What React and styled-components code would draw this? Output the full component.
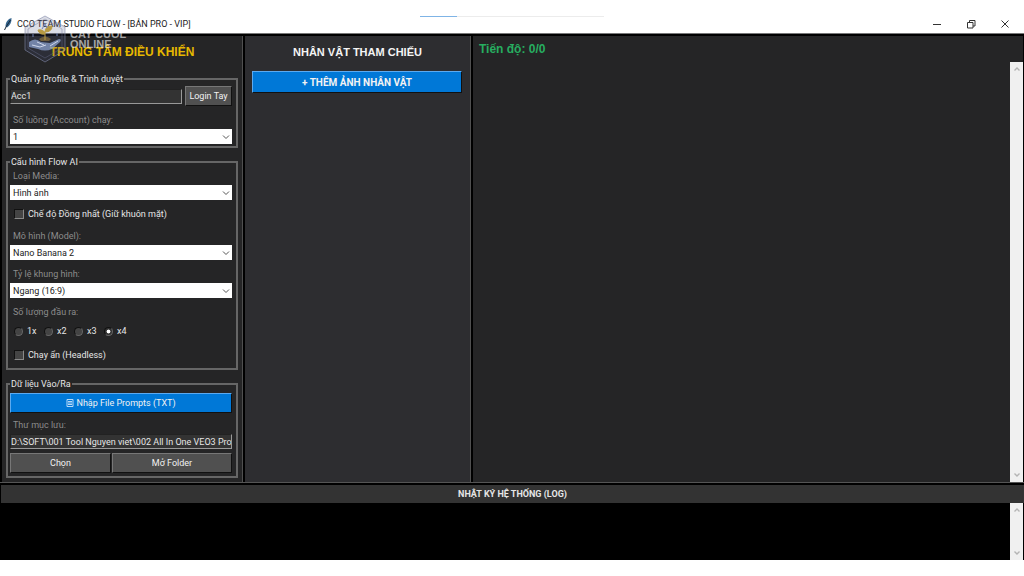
import React, { useState } from 'react';
import styled, { createGlobalStyle } from 'styled-components';

const mediaTypes = ['Hình ảnh', 'Video'];
const models = ['Nano Banana 2', 'Nano Banana Pro'];
const ratios = ['Ngang (16:9)', 'Dọc (9:16)'];
const threads = ['1', '2', '3', '4'];
const outputs = ['1x', 'x2', 'x3', 'x4'];

const SelectField = ({ id, label, options }) => (
  <Field>
    <label htmlFor={id}>{label}</label>
    <SelectBox>
      <select id={id}>
        {options.map((option) => (
          <option key={option}>{option}</option>
        ))}
      </select>
      <svg viewBox="0 0 8 8" width="8" height="8" aria-hidden="true">
        <path d="M1 2.5 4 5.5 7 2.5" fill="none" stroke="#555" />
      </svg>
    </SelectBox>
  </Field>
);

const Arrow = ({ down }) => (
  <svg viewBox="0 0 8 8" width="8" height="8" aria-hidden="true">
    <path
      d={down ? 'M1.5 2.5 4 5 6.5 2.5' : 'M1.5 5.5 4 3 6.5 5.5'}
      fill="none"
      stroke="#b4b4b4"
      strokeWidth="1.4"
    />
  </svg>
);

const ScrollBar = () => (
  <Scroll>
    <Arrow />
    <Arrow down />
  </Scroll>
);

const Watermark = () => (
  <Mark>
    <svg viewBox="0 0 44 50" width="44" height="50" aria-hidden="true">
      <path
        d="M22 2 42 13V36L22 48 2 36V13Z"
        fill="#4a5480"
        fillOpacity="0.2"
        stroke="#8288a8"
        strokeOpacity="0.6"
      />
      <path d="M22 5 39 15V34L22 44 5 34V15Z" fill="none" stroke="#6b7192" strokeOpacity="0.4" />
      <path d="M6 28q6-5 12 0l9 1 9-4q3 0 1 3l-8 7q-7 3-14 0l-9-2Z" fill="#8aa0cc" fillOpacity="0.75" />
      <path d="M9 31l8 2 6-2M27 32l8-5M14 28l7 3" fill="none" stroke="#e4ebfa" strokeOpacity="0.8" />
      <path d="M16 25q6-5 12 0l-2 2H18Z" fill="#77643d" fillOpacity="0.9" />
      <path
        d="M22 26V17M22 20q-6 1-7-4 6-1 7 4ZM22 18q0-6 7-6 0 6-7 6Z"
        fill="#b79a43"
        stroke="#b79a43"
      />
      <path d="M19 15l3-5 2 4M10 20v3M34 19v3" fill="none" stroke="#7183b4" />
    </svg>
    <p>
      CAY CUOL
      <br />
      ONLINE
    </p>
  </Mark>
);

const App = () => {
  const [output, setOutput] = useState('x4');

  return (
    <>
      <GlobalStyle />
      <Window>
        <TitleBar>
          <svg viewBox="0 0 10 14" width="10" height="14" aria-hidden="true">
            <path d="M8.5 1C5 2 2.500 5 2.500 9.500L4 10.500C7 8.500 8.800 5 8.500 1Z" fill="#34648c" />
            <path d="M7.500 3 3 10 1.500 13" fill="none" stroke="#16283a" />
          </svg>
          <h1>CCO TEAM STUDIO FLOW - [BẢN PRO - VIP]</h1>
          <WindowButton aria-label="Minimize">
            <svg viewBox="0 0 10 10" width="10" height="10">
              <path d="M1 5.500H9" />
            </svg>
          </WindowButton>
          <WindowButton aria-label="Restore">
            <svg viewBox="0 0 10 10" width="10" height="10">
              <path d="M1.500 3.500H7V9H1.500ZM3.500 3.500V1.500H9V7H7" />
            </svg>
          </WindowButton>
          <WindowButton aria-label="Close">
            <svg viewBox="0 0 10 10" width="10" height="10">
              <path d="M1.500 1.500 8.500 8.500M8.500 1.500 1.500 8.500" />
            </svg>
          </WindowButton>
          <Loading />
          <Watermark />
        </TitleBar>

        <Workspace>
          <Panel>
            <Heading>TRUNG TÂM ĐIỀU KHIỂN</Heading>
            <Group>
              <legend>Quản lý Profile &amp; Trình duyệt</legend>
              <ProfileRow>
                <Entry aria-label="Profile" defaultValue="Acc1" />
                <Button>Login Tay</Button>
              </ProfileRow>
              <SelectField id="threads" label="Số luồng (Account) chạy:" options={threads} />
            </Group>

            <Group>
              <legend>Cấu hình Flow AI</legend>
              <SelectField id="media" label="Loại Media:" options={mediaTypes} />
              <Choice>
                <input type="checkbox" />
                Chế độ Đồng nhất (Giữ khuôn mặt)
              </Choice>
              <SelectField id="model" label="Mô hình (Model):" options={models} />
              <SelectField id="ratio" label="Tỷ lệ khung hình:" options={ratios} />
              <Field>
                <span id="outputs">Số lượng đầu ra:</span>
                <RadioRow role="radiogroup" aria-labelledby="outputs">
                  {outputs.map((item) => (
                    <Radio key={item}>
                      <input
                        type="radio"
                        name="output"
                        checked={output === item}
                        onChange={() => setOutput(item)}
                      />
                      {item}
                    </Radio>
                  ))}
                </RadioRow>
              </Field>
              <Choice>
                <input type="checkbox" />
                Chạy ẩn (Headless)
              </Choice>
            </Group>

            <Group>
              <legend>Dữ liệu Vào/Ra</legend>
              <ImportRow>
                <Button $primary>
                  <svg viewBox="0 0 8 8" width="8" height="8" aria-hidden="true">
                    <path d="M1 .5H7V7.500H1ZM2 2.500H6M2 4H6M2 5.500H6" fill="none" stroke="#b5d8f8" />
                  </svg>
                  Nhập File Prompts (TXT)
                </Button>
              </ImportRow>
              <Field>
                <label htmlFor="folder">Thư mục lưu:</label>
                <Entry id="folder" defaultValue="D:\SOFT\001 Tool Nguyen viet\002 All In One VEO3 Pro" />
              </Field>
              <FolderRow>
                <Button>Chọn</Button>
                <Button>Mở Folder</Button>
              </FolderRow>
            </Group>
          </Panel>

          <Panel $light>
            <Heading $light>NHÂN VẬT THAM CHIẾU</Heading>
            <AddRow>
              <Button $primary $strong>
                + THÊM ẢNH NHÂN VẬT
              </Button>
            </AddRow>
          </Panel>

          <Results>
            <Progress>Tiến độ: 0/0</Progress>
            <ScrollBar />
          </Results>
        </Workspace>

        <LogTitle>NHẬT KÝ HỆ THỐNG (LOG)</LogTitle>
        <Log>
          <ScrollBar />
        </Log>
      </Window>
    </>
  );
};

const GlobalStyle = createGlobalStyle`
  * {
    box-sizing: border-box;
  }
  body {
    margin: 0;
    background: #fff;
    color: #e6e6e6;
    font: 9px/12px Roboto, "Open Sans", sans-serif;
  }
  h1, h2, p {
    margin: 0;
  }
  button, input, select {
    font: inherit;
    color: inherit;
    border-radius: 0;
  }
`;

const Window = styled.div`
  display: flex;
  flex-direction: column;
  min-height: 100vh;
  padding-bottom: 17px;
`;

const TitleBar = styled.header`
  position: relative;
  display: flex;
  align-items: center;
  height: 33px;
  padding: 15px 2px 0 3px;
  color: #222;
  h1 {
    flex: 1;
    margin-left: 4px;
    font-size: 9px;
    font-weight: 400;
  }
`;

const WindowButton = styled.button`
  display: grid;
  place-items: center;
  width: 34px;
  height: 18px;
  padding: 0;
  border: 0;
  background: none;
  svg {
    fill: none;
    stroke: #333;
  }
`;

const Loading = styled.div`
  position: absolute;
  top: 16px;
  left: 41%;
  width: 18%;
  height: 1px;
  background: linear-gradient(to right, #7fb4e6 20%, #ececec 20%);
`;

const Mark = styled.div`
  position: absolute;
  z-index: 1;
  top: 14px;
  left: 23px;
  display: flex;
  align-items: center;
  gap: 3px;
  pointer-events: none;
  p {
    color: rgba(255, 255, 255, 0.6);
    font: bold 11px/10px "Liberation Sans", Arial, sans-serif;
  }
`;

const Workspace = styled.main`
  flex: 1;
  display: grid;
  grid-template-columns: 241px 226px 1fr;
  gap: 2px;
  padding: 2px 1px 0 2px;
  border-top: 1px solid #777;
  border-bottom: 1px solid #555;
  background: #000;
`;

const Panel = styled.section`
  padding: 0 4px 4px;
  border-right: 1px solid #505050;
  background: ${({ $light }) => ($light ? '#2d2d30' : '#252526')};
`;

const Heading = styled.h2`
  margin-bottom: 3px;
  color: ${({ $light }) => ($light ? '#f4f4f4' : '#e6b800')};
  font: bold ${({ $light }) => ($light ? '11px' : '12px')}/32px "Liberation Sans", Arial, sans-serif;
  text-align: center;
`;

const Group = styled.fieldset`
  min-width: 0;
  margin: 0 0 8px;
  padding: 0 4px 2px 2px;
  border: 2px solid #666;
  &:first-of-type {
    margin-top: 5px;
  }
  &:nth-of-type(2) {
    padding-bottom: 0;
  }
  &:last-child {
    margin-bottom: 0;
    padding-bottom: 3px;
  }
  legend {
    padding: 0 1px;
    color: #e6e6e6;
  }
`;

const Field = styled.div`
  display: flex;
  flex-direction: column;
  label,
  > span {
    padding-left: 3px;
    color: #8c8c8c;
    line-height: 17px;
  }
  & + & {
    margin-top: 6px;
  }
`;

const SelectBox = styled.div`
  position: relative;
  select {
    display: block;
    appearance: none;
    width: 100%;
    height: 15px;
    padding: 0 3px;
    border: 0;
    background: #fff;
    color: #222;
  }
  svg {
    position: absolute;
    top: 4px;
    right: 2px;
    pointer-events: none;
  }
`;

const Entry = styled.input`
  flex: 1;
  min-width: 0;
  height: 15px;
  flex-basis: auto;
  padding: 0;
  border: 1px solid #222;
  border-right-color: #999;
  border-bottom-color: #999;
  background: #333;
`;

const Button = styled.button`
  flex: 1;
  display: flex;
  align-items: center;
  justify-content: center;
  gap: 2px;
  height: ${({ $strong }) => ($strong ? '22px' : '20px')};
  padding: 0 3px;
  border: 1px solid;
  border-color: ${({ $primary }) => ($primary ? '#5caaf0 #111 #111 #5caaf0' : '#777 #111 #111 #777')};
  background: ${({ $primary }) => ($primary ? '#0078d7' : '#505050')};
  color: #f2f2f2;
  font: ${({ $strong }) => ($strong ? 'bold 10px Roboto, Arial, sans-serif' : 'inherit')};
`;

const ProfileRow = styled.div`
  display: flex;
  align-items: center;
  gap: 3px;
  margin: 1px 0 6px;
  ${Button} {
    flex: none;
    width: 47px;
  }
`;

const Choice = styled.label`
  display: flex;
  align-items: center;
  gap: 4px;
  height: 28px;
  padding-left: 4px;
  &:last-child {
    height: 27px;
  }
  input {
    appearance: none;
    width: 10px;
    height: 10px;
    margin: 0;
    border: 1px solid;
    border-color: #111 #888 #888 #111;
    background: #444;
  }
`;

const RadioRow = styled.div`
  display: flex;
  height: 20px;
  padding-left: 4px;
`;

const Radio = styled.label`
  && {
    display: flex;
    align-items: center;
    gap: 4px;
    width: 30px;
    padding: 0;
    color: #e6e6e6;
  }
  input {
    appearance: none;
    flex: none;
    width: 9px;
    height: 9px;
    margin: 0;
    border: 1px solid;
    border-color: #111 #666 #666 #111;
    border-radius: 50%;
    background: #444;
  }
  input:checked {
    background: radial-gradient(circle closest-side, #fff 45%, #333 65%);
  }
`;

const ImportRow = styled.div`
  display: flex;
  padding: 3px 0 4px;
`;

const FolderRow = styled.div`
  display: grid;
  grid-template-columns: 101px 1fr;
  gap: 1px;
  margin-top: 4px;
`;

const AddRow = styled.div`
  display: flex;
  padding: 0 4px 0 3px;
`;

const Results = styled.section`
  display: flex;
  flex-direction: column;
  align-items: flex-end;
  background: #252526;
`;

const Progress = styled.p`
  align-self: stretch;
  padding-left: 6px;
  color: #27ae60;
  font: bold 12px/26px "Liberation Sans", Arial, sans-serif;
`;

const Scroll = styled.div`
  flex: 1;
  display: flex;
  flex-direction: column;
  justify-content: space-between;
  align-items: center;
  width: 13px;
  padding: 3px 0;
  background: #f0f0f0;
`;

const LogTitle = styled.h2`
  border: solid #000;
  border-width: 2px 0 0 1px;
  background: #333;
  font: bold 9px/18px Roboto, Arial, sans-serif;
  text-align: center;
`;

const Log = styled.section`
  display: flex;
  flex-direction: column;
  align-items: flex-end;
  height: 57px;
  padding-right: 1px;
  background: #000;
`;

export default App;
